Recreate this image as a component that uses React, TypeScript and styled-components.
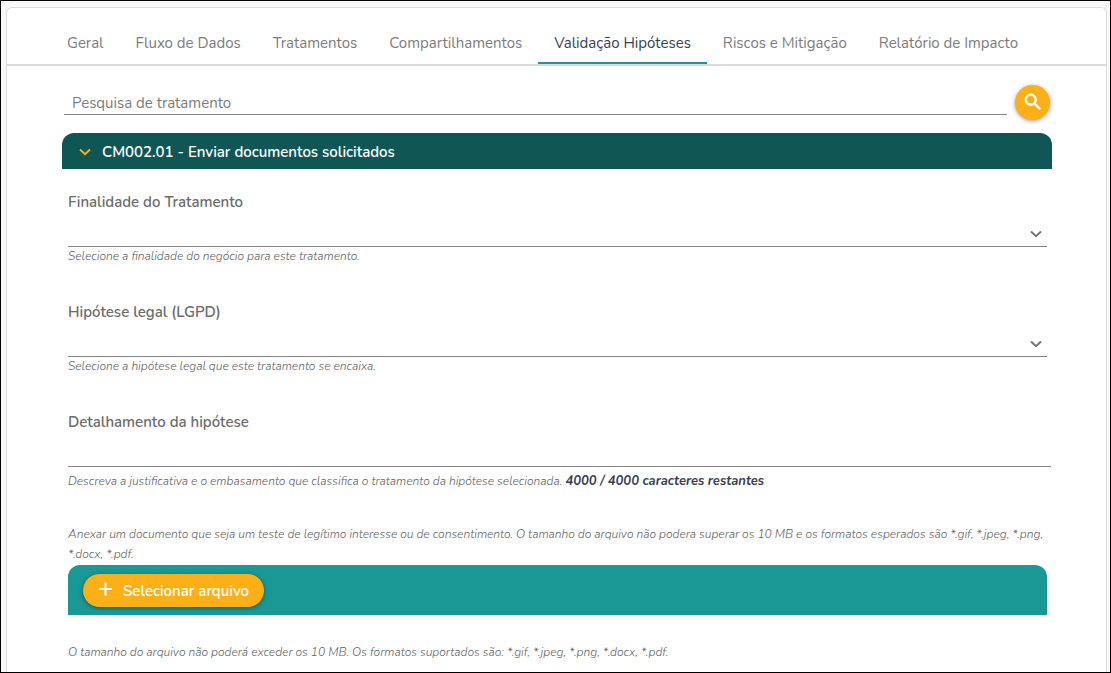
import React, { useState } from "react";
import styled, { createGlobalStyle } from "styled-components";

const GlobalStyle = createGlobalStyle`
  *, *::before, *::after { box-sizing: border-box; }
  body {
    margin: 0;
    background: #f8f8f8;
    color: #6c6c6c;
    font-family: Nunito, Lato, "Open Sans", sans-serif;
    font-size: 15px;
    line-height: 20px;
  }
  button, input, select, textarea { font: inherit; color: inherit; }
`;

const Frame = styled.div`
  display: flex;
  min-height: 100vh;
  padding: 6px 3px 0 5px;
  border: 1px solid #000;
`;

const Card = styled.main`
  flex: 1;
  min-width: 0;
  border: 1px solid #dcdcdc;
  border-bottom: 0;
  border-radius: 6px 6px 0 0;
  background: #fff;
`;

const Tabs = styled.nav`
  display: flex;
  padding: 0 44px;
  border-bottom: 2px solid #dcdcdc;
`;

const Tab = styled.a<{ $active?: boolean }>`
  padding: 25px 16px 9px;
  border-bottom: 2px solid ${(p) => (p.$active ? "#199896" : "transparent")};
  color: ${(p) => (p.$active ? "#39414f" : "#7c7c7c")};
  text-decoration: none;
  white-space: nowrap;
`;

const Content = styled.div`
  padding: 19px 54px 0 55px;
`;

const SearchRow = styled.form`
  display: flex;
  align-items: flex-start;
  gap: 8px;
  padding: 0 2px;
`;

const SearchInput = styled.input`
  flex: 1;
  min-width: 0;
  height: 30px;
  padding: 6px 8px 0;
  border: 0;
  border-bottom: 1px solid #858585;
  background: transparent;
  outline: none;
  &::placeholder { color: #7c7c7c; opacity: 1; }
`;

const SearchButton = styled.button`
  display: grid;
  place-items: center;
  width: 35px;
  height: 35px;
  padding: 0 0 1px;
  border: 0;
  border-radius: 50%;
  background: #fdaf17;
  color: #fff;
  box-shadow: 0 1px 4px rgba(0, 0, 0, 0.4);
`;

const AccordionHeader = styled.button`
  display: flex;
  align-items: center;
  gap: 9px;
  width: 100%;
  height: 36px;
  margin-top: 13px;
  padding: 1px 15px 0;
  border: 0;
  border-radius: 12px 12px 0 0;
  background: #105655;
  color: #fff;
  font-weight: 600;
  text-align: left;
  svg { color: #fdaf17; }
`;

const Panel = styled.section`
  padding: 23px 5px 0 6px;
`;

const Field = styled.div<{ $gap?: number }>`
  margin-bottom: ${(p) => p.$gap ?? 36}px;
`;

const Label = styled.label`
  display: block;
  font-weight: 600;
`;

const SelectBox = styled.div`
  position: relative;
  height: 35px;
  margin-bottom: -1px;
  color: #747474;
  svg {
    position: absolute;
    right: 3px;
    bottom: 5px;
    pointer-events: none;
  }
`;

const Select = styled.select`
  width: 100%;
  height: 100%;
  border: 0;
  border-bottom: 1px solid #858585;
  border-radius: 0;
  background: transparent;
  appearance: none;
  outline: none;
`;

const Detail = styled.textarea`
  display: block;
  width: calc(100% + 4px);
  height: 35px;
  padding: 8px 0;
  margin-bottom: 4px;
  border: 0;
  border-bottom: 1px solid #858585;
  background: transparent;
  resize: none;
  outline: none;
  overflow: hidden;
`;

const Help = styled.p`
  margin: 0;
  color: #606060;
  font-size: 12px;
  font-style: italic;
  font-weight: 300;
`;

const Counter = styled.strong`
  color: #39414f;
  font-size: 13px;
  font-weight: 700;
`;

const UploadBar = styled.div`
  display: flex;
  align-items: center;
  height: 50px;
  margin: 1px 0 27px;
  padding: 0 15px;
  border-radius: 12px 12px 0 0;
  background: #199896;
`;

const UploadButton = styled.button`
  display: flex;
  align-items: center;
  gap: 10px;
  height: 33px;
  padding: 1px 15px 0;
  border: 0;
  border-radius: 17px;
  background: #fdaf17;
  color: #fff;
  font-weight: 600;
  box-shadow: 0 1px 4px rgba(0, 0, 0, 0.4);
`;

const Chevron = () => (
  <svg width="16" height="16" viewBox="0 0 16 16" fill="none" stroke="currentColor" strokeWidth="2" aria-hidden="true">
    <path d="M3 5.5 8 10.2 13 5.5" />
  </svg>
);

const SearchIcon = () => (
  <svg width="22" height="22" viewBox="0 0 24 24" fill="currentColor" stroke="currentColor" strokeWidth="0.5" aria-hidden="true">
    <path d="M15.5 14h-.79l-.28-.27A6.47 6.47 0 0 0 16 9.5 6.5 6.5 0 1 0 9.5 16c1.61 0 3.09-.59 4.23-1.57l.27.28v.79l5 4.99L20.49 19l-4.99-5zm-6 0C7.01 14 5 11.99 5 9.5S7.01 5 9.5 5 14 7.01 14 9.5 11.99 14 9.5 14z" />
  </svg>
);

const PlusIcon = () => (
  <svg width="15" height="18" viewBox="0 0 15 18" fill="none" stroke="currentColor" strokeWidth="2" aria-hidden="true">
    <path d="M1 7h13M7.5 .5v13" />
  </svg>
);

const tabs = [
  "Geral",
  "Fluxo de Dados",
  "Tratamentos",
  "Compartilhamentos",
  "Validação Hipóteses",
  "Riscos e Mitigação",
  "Relatório de Impacto",
];

const LIMIT = 4000;

export default function App() {
  const [active, setActive] = useState("Validação Hipóteses");
  const [open, setOpen] = useState(true);
  const [detail, setDetail] = useState("");

  return (
    <>
      <GlobalStyle />
      <Frame>
        <Card>
          <Tabs>
            {tabs.map((t) => (
              <Tab
                key={t}
                href="#"
                $active={t === active}
                aria-current={t === active ? "page" : undefined}
                onClick={() => setActive(t)}
              >
                {t}
              </Tab>
            ))}
          </Tabs>
          <Content>
            <SearchRow onSubmit={(e) => e.preventDefault()}>
              <SearchInput placeholder="Pesquisa de tratamento" aria-label="Pesquisa de tratamento" />
              <SearchButton type="submit" aria-label="Pesquisar">
                <SearchIcon />
              </SearchButton>
            </SearchRow>
            <AccordionHeader type="button" aria-expanded={open} onClick={() => setOpen(!open)}>
              <Chevron />
              CM002.01 - Enviar documentos solicitados
            </AccordionHeader>
            {open && (
              <Panel>
                <Field>
                  <Label htmlFor="finalidade">Finalidade do Tratamento</Label>
                  <SelectBox>
                    <Select id="finalidade">
                      <option value="" />
                    </Select>
                    <Chevron />
                  </SelectBox>
                  <Help>Selecione a finalidade do negócio para este tratamento.</Help>
                </Field>
                <Field>
                  <Label htmlFor="hipotese">Hipótese legal (LGPD)</Label>
                  <SelectBox>
                    <Select id="hipotese">
                      <option value="" />
                    </Select>
                    <Chevron />
                  </SelectBox>
                  <Help>Selecione a hipótese legal que este tratamento se encaixa.</Help>
                </Field>
                <Field $gap={33}>
                  <Label htmlFor="detalhamento">Detalhamento da hipótese</Label>
                  <Detail
                    id="detalhamento"
                    rows={1}
                    maxLength={LIMIT}
                    value={detail}
                    onChange={(e) => setDetail(e.target.value)}
                  />
                  <Help>
                    Descreva a justificativa e o embasamento que classifica o tratamento da hipótese selecionada.{" "}
                    <Counter>
                      {LIMIT - detail.length} / {LIMIT} caracteres restantes
                    </Counter>
                  </Help>
                </Field>
                <Help>
                  Anexar um documento que seja um teste de legítimo interesse ou de consentimento. O tamanho do
                  arquivo não podera superar os 10 MB e os formatos esperados são *.gif, *.jpeg, *.png, *.docx, *.pdf.
                </Help>
                <UploadBar>
                  <UploadButton type="button">
                    <PlusIcon />
                    Selecionar arquivo
                  </UploadButton>
                </UploadBar>
                <Help>
                  O tamanho do arquivo não poderá exceder os 10 MB. Os formatos suportados são: *.gif, *.jpeg, *.png,
                  *.docx, *.pdf.
                </Help>
              </Panel>
            )}
          </Content>
        </Card>
      </Frame>
    </>
  );
}
